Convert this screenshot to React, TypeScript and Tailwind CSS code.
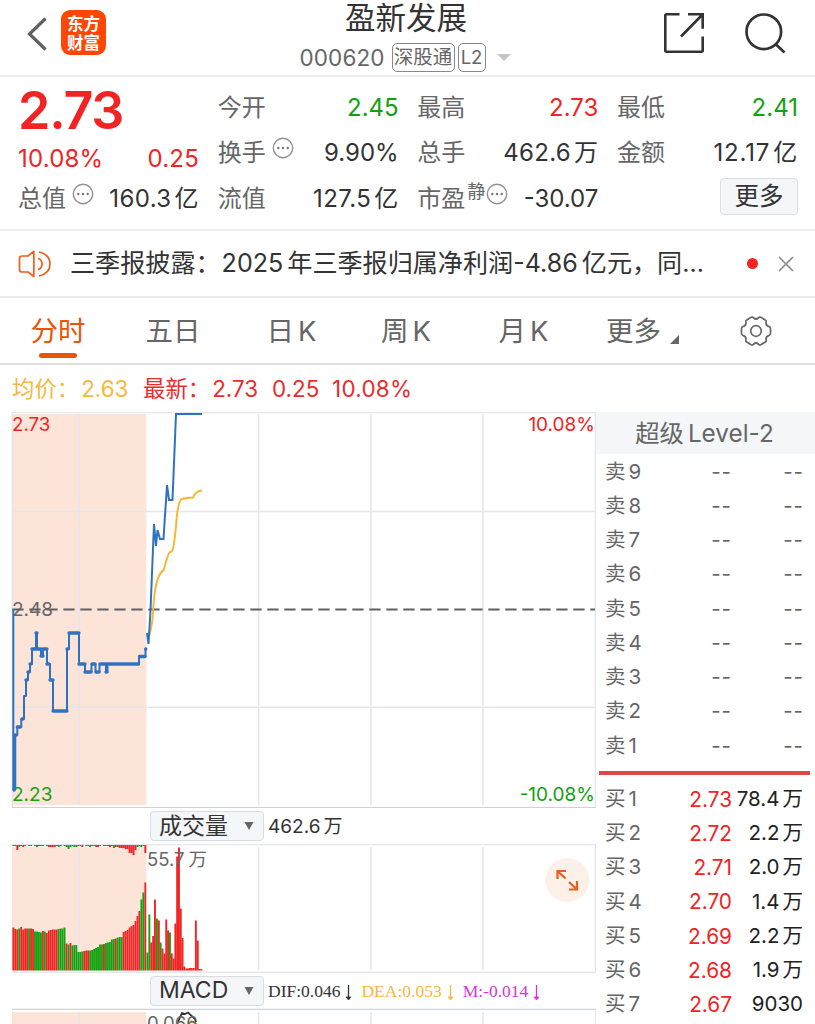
import { clsx } from "clsx";

const RED = "#f12323";
const GREEN = "#12a10f";
const BLUE = "#2f73c0";
const GRID = "#e5e6ec";

const tabs = [
  { label: "五日", suffix: "", width: "w-[114px]" },
  { label: "日", suffix: "K", width: "w-[123px]" },
  { label: "周", suffix: "K", width: "w-[106px]" },
  { label: "月", suffix: "K", width: "w-[129px]" },
];

const sells = [9, 8, 7, 6, 5, 4, 3, 2, 1];

const buys = [
  { level: 1, price: "2.73", volume: "78.4", unit: "万" },
  { level: 2, price: "2.72", volume: "2.2", unit: "万" },
  { level: 3, price: "2.71", volume: "2.0", unit: "万" },
  { level: 4, price: "2.70", volume: "1.4", unit: "万" },
  { level: 5, price: "2.69", volume: "2.2", unit: "万" },
  { level: 6, price: "2.68", volume: "1.9", unit: "万" },
  { level: 7, price: "2.67", volume: "9030", unit: "" },
];

// call auction volume, one bar per slot
const auctionHeights = [
  43, 41.5, 41, 42, 43.5, 41, 42, 42, 42, 42, 41.5, 39, 39, 38.5, 38, 39.5, 39, 37.5, 40, 40.5, 41, 41, 41,
  41.5, 42, 42, 43, 27, 26, 27.5, 25, 25.5, 25.5, 18.5, 18.5, 19, 19.5, 20, 20, 20, 20.5, 21.5, 22.5, 23.5,
  26, 26, 26.5, 27.5, 28, 28.5, 31, 31.5, 32, 33, 33.5, 33.5, 38.5, 39.5, 40.5, 43, 44.5, 45.5, 49.5, 54.5,
  59.5, 71, 78, 88,
];
const auctionColors = "RRRGRRRRGRRGGGGRGRRRRRRGGGGRGRGGGGGGRRRGGGGGGGRGGGGGRGGGRRRRRRRRRGGR";

// unmatched volume hanging from the top edge
const unmatched =
  "1R1R5R2G1R2R1R0R1R1G0R1G2G1R1G1G0R1G2R2R2R2R1G2G1R0G1R2G4G2G1R2G2G1R1G2R0R1G1R2G1G1G2R2R1G0G1G1G1R2R1G3G2R2G3R3R3R4R4R8R8R10R5R2G1R2G1G8R";

const sessionBars: [number, number, string][] = [
  [146.5, 18, "G"], [148.4, 56, "G"], [150.3, 28, "R"], [152.2, 34.5, "R"], [154, 71, "R"],
  [156, 52, "G"], [157.9, 50, "R"], [159.7, 28, "G"], [161.5, 22, "R"], [163.4, 17, "R"],
  [165.3, 51, "R"], [167.1, 40, "R"], [169, 38, "G"], [170.8, 17, "R"], [172.7, 12, "R"],
  [174.4, 47, "R"], [176.2, 114, "R"], [178, 123, "R"], [179.8, 62, "R"], [181.6, 32.5, "R"],
  [183.4, 4, "R"], [185.3, 2, "R"], [187.1, 2, "R"], [189, 2.5, "R"], [190.8, 2.5, "R"],
  [192.7, 2.5, "R"], [194.9, 50, "R"], [196.8, 30, "R"], [198.6, 1.5, "R"], [200.4, 1.5, "R"],
];

function Value({ num, unit, className }: { num: string; unit?: string; className?: string }) {
  return (
    <span className={clsx("whitespace-nowrap", className)}>
      {num}
      {unit && <span className="ml-[3px]">{unit}</span>}
    </span>
  );
}

function InfoDot() {
  return (
    <svg viewBox="0 0 22 22" className="mb-[10px] h-[22px] w-[22px] shrink-0">
      <circle cx="11" cy="11" r="9.7" fill="none" stroke="#929292" strokeWidth="1.4" />
      <circle cx="6.3" cy="11" r="1.2" fill="#777" />
      <circle cx="11" cy="11" r="1.2" fill="#777" />
      <circle cx="15.7" cy="11" r="1.2" fill="#777" />
    </svg>
  );
}

function Header() {
  return (
    <header className="flex h-[77px] border-b-2 border-[#ededed]">
      <div className="flex w-[240px] items-start pt-[10px] pl-[27px]">
        <svg viewBox="0 0 20 34" className="mt-[7px] h-[34px] w-5" fill="none" stroke="#606060" strokeWidth="3.2">
          <path d="M18.5 1.5 2.5 17l16 15.5" />
        </svg>
        <div className="ml-[14px] flex h-[45px] w-[45px] flex-col items-center justify-center rounded-[9px] bg-[#ff4605] pt-[2px] text-[16.5px] leading-[18.5px] font-bold text-white">
          <span>东方</span>
          <span>财富</span>
        </div>
      </div>
      <div className="flex w-[332px] flex-col items-center">
        <h1 className="h-[37px] text-[30.5px] leading-[35px] text-[#333]">盈新发展</h1>
        <div className="flex h-[42px] items-center pt-[5px] pr-[2px] text-[#666]">
          <span className="w-[92px] text-[22.5px] tracking-[0.1px]">000620</span>
          <span className="flex h-[29px] w-[63px] items-center justify-center rounded-[5px] border-[1.5px] border-[#888] text-[19.5px]">
            深股通
          </span>
          <span className="ml-[3px] flex h-[29px] w-[28px] items-center justify-center rounded-[5px] border-[1.5px] border-[#888] text-[18.5px]">
            L2
          </span>
          <svg viewBox="0 0 14 7" className="ml-[11px] h-[7px] w-[14px]">
            <path d="M0 0h14L7 7z" fill="#c4c4c4" />
          </svg>
        </div>
      </div>
      <div className="flex flex-1 items-start pt-[12px] pl-[91px]">
        <svg viewBox="0 0 42 42" className="h-[42px] w-[42px]" fill="none" stroke="#333" strokeWidth="2.6">
          <path d="M16.5 2.3H3.5Q2.3 2.3 2.3 3.5v35q0 1.2 1.2 1.2h35q1.2 0 1.2-1.2V24.5M25 2.3h14.7v14.5M39.5 2.5 18 24.5" />
        </svg>
        <svg viewBox="0 0 42 42" className="ml-[39px] h-[42px] w-[42px]" fill="none" stroke="#333" strokeWidth="2.7">
          <circle cx="19.8" cy="19.8" r="17.3" />
          <path d="m31.5 32 9 8.5" />
        </svg>
      </div>
    </header>
  );
}

function Stat({ label, children, info }: { label: string; children?: React.ReactNode; info?: boolean }) {
  return (
    <div className="flex h-[45.5px] items-center justify-between">
      <span className="flex items-center gap-[6px] text-[#666]">
        {label}
        {info && <InfoDot />}
      </span>
      {children}
    </div>
  );
}

function Quote() {
  return (
    <section className="flex h-[154px] justify-between border-b-2 border-[#ededed] pt-[8px] pr-[17px] pl-[18px] text-[24px] text-[#333]">
      <div className="w-[181px]">
        <div className="h-[52px] text-[52px] leading-[51px] font-semibold tracking-[-1.2px] text-[#f12323]">2.73</div>
        <div className="flex h-[39px] items-center justify-between pt-[5px] tracking-[0.2px] text-[#f12323]">
          <span>10.08%</span>
          <span>0.25</span>
        </div>
        <Stat label="总值" info>
          <Value num="160.3" unit="亿" className="tracking-[0.4px]" />
        </Stat>
      </div>
      <div className="w-[181px]">
        <Stat label="今开">
          <Value num="2.45" className="text-[#12a10f]" />
        </Stat>
        <Stat label="换手" info>
          <Value num="9.90%" />
        </Stat>
        <Stat label="流值">
          <Value num="127.5" unit="亿" className="tracking-[0.4px]" />
        </Stat>
      </div>
      <div className="w-[181px]">
        <Stat label="最高">
          <Value num="2.73" className="text-[#f12323]" />
        </Stat>
        <Stat label="总手">
          <Value num="462.6" unit="万" className="tracking-[0.3px]" />
        </Stat>
        <div className="flex h-[45.5px] items-center justify-between">
          <span className="flex items-center text-[#666]">
            市盈
            <span className="mb-[14px] ml-[2px] text-[18px]">静</span>
            <span className="ml-px">
              <InfoDot />
            </span>
          </span>
          <Value num="-30.07" />
        </div>
      </div>
      <div className="w-[181px]">
        <Stat label="最低">
          <Value num="2.41" className="text-[#12a10f]" />
        </Stat>
        <Stat label="金额">
          <Value num="12.17" unit="亿" className="tracking-[0.8px]" />
        </Stat>
        <div className="flex justify-end pt-[2px]">
          <button className="h-[37px] w-[78px] rounded-[4px] border border-[#dcdee2] bg-[#f4f6f9] text-[24.5px] leading-[35px]">
            更多
          </button>
        </div>
      </div>
    </section>
  );
}

function Notice() {
  return (
    <section className="flex h-[67px] items-center border-b-2 border-[#ededed] pl-[18px] text-[#333]">
      <svg viewBox="0 0 34 28" className="h-[28px] w-[34px]" fill="none" stroke="#ea5e1b" strokeWidth="1.7" strokeLinejoin="round">
        <path d="M15.8 1.3v25.2L10 22H4q-2.5 0-2.5-2.5v-11Q1.5 6 4 6h6z" />
        <path d="M20 8.5q4 1 4 5.500t-4 5.500M21 2q11 2.500 11 12T21 26" />
      </svg>
      <div className="ml-[18px] flex w-[662px] text-[25.1px] whitespace-nowrap">
        三季报披露：<span className="ml-px">2025</span>
        <span className="ml-[4px]">年三季报归属净利润-4.86</span>
        <span className="ml-[4px]">亿元，同…</span>
      </div>
      <span className="ml-[15px] h-[11px] w-[11px] rounded-full bg-[#f12323]" />
      <svg viewBox="0 0 16 16" className="ml-[20px] h-4 w-4" stroke="#8a8a8a" strokeWidth="1.7">
        <path d="m1 1 14 14M15 1 1 15" />
      </svg>
    </section>
  );
}

function Tabs() {
  return (
    <nav className="flex h-[67px] border-b-2 border-[#dedede] text-[27.5px] text-[#666]">
      <div className="flex w-[116px] flex-col items-center pt-[11px] text-[#ea5504]">
        <span className="h-[44px] leading-[44px]">分时</span>
        <span className="h-[5px] w-[38px] rounded-full bg-[#ea5504]" />
      </div>
      {tabs.map((tab) => (
        <div key={tab.label} className={clsx("flex justify-center gap-[4px] pt-[11px] leading-[44px]", tab.width)}>
          <span>{tab.label}</span>
          {tab.suffix && <span>{tab.suffix}</span>}
        </div>
      ))}
      <div className="flex w-[116px] pt-[11px] pl-[18px] leading-[44px]">
        更多
        <svg viewBox="0 0 9 9" className="mt-[26px] ml-[9px] h-[9px] w-[9px]">
          <path d="M9 0v9H0z" fill="#666" />
        </svg>
      </div>
      <svg viewBox="0 0 32 32" className="mt-[17px] ml-[36px] h-8 w-8" fill="none" stroke="#666" strokeWidth="1.7">
        <circle cx="16" cy="16" r="5.3" />
        <path d="M11.2 2.3q1.5-.6 2.5.7 2.3 2 4.600 0 1-1.3 2.500-.7l4.500 2.600q1.300.8.800 2.300-.5 3.200 2.500 4.200 1.500.300 1.800 1.700l.2 2.900-.2 2.900q-.3 1.400-1.800 1.700-3 1-2.500 4.200.5 1.500-.8 2.300l-4.500 2.600q-1.500.6-2.500-.7-2.300-2-4.600 0-1 1.300-2.500.7l-4.500-2.600q-1.300-.8-.8-2.300.5-3.200-2.500-4.200-1.500-.300-1.800-1.700L1.400 16l.2-2.900q.3-1.400 1.800-1.700 3-1 2.500-4.200-.5-1.500.8-2.300z" />
      </svg>
    </nav>
  );
}

function Verticals({ top, bottom }: { top: number; bottom: number }) {
  return (
    <g stroke={GRID} strokeWidth="1.5">
      {[79, 258.6, 371, 483].map((x) => (
        <line key={x} x1={x} x2={x} y1={top} y2={bottom} />
      ))}
    </g>
  );
}

function PriceChart() {
  return (
    <svg viewBox="0 412 596 396" className="block h-[396px] w-[596px]">
      <rect x="12" y="414" width="134.3" height="391" fill="#fce4d9" />
      <Verticals top={414} bottom={805} />
      <g stroke={GRID} strokeWidth="1.5">
        <path d="M12 412.5h584M12 511.6h583M12 707.3h583M12.3 412v395M595.5 412v396" />
      </g>
      <path d="M12 807.5h584" stroke="#cfd3d8" />
      <g fontSize="18.7">
        <text x="12" y="431" fill={RED}>2.73</text>
        <text x="12" y="615.5" fill="#666" fontSize="19">2.48</text>
        <text x="12" y="800.5" fill={GREEN} fontSize="19">2.23</text>
        <text x="595" y="431" fill={RED} textAnchor="end" fontSize="19">10.08%</text>
        <text x="595" y="800.5" fill={GREEN} textAnchor="end" fontSize="19">-10.08%</text>
      </g>
      <path d="M12.3 609.5H595" stroke="#606060" strokeWidth="1.9" strokeDasharray="11.3 5.7" />
      <path
        d="M149 636Q152 628 153 612 154.5 585 159 576 161 571.5 163.5 570.5 166 561 169 553 170.5 552 172.5 550.5 174.5 543 176 526 177.5 504 181 499.5 184 498 193 497.5 196 490.5 202 490.5"
        fill="none"
        stroke="#f8b62d"
        strokeWidth="1.9"
      />
      <g fill="none" stroke={BLUE} strokeLinejoin="round">
        <path
          d="M13.3 609V790M15.3 735v55M15.3 735h2v-8h4v-8h2.7v-23h2v-16h2v-8h2v-8h2v-15h4v-16h1v16h4v7h2v-7h4v15h3v16h3v31h14v-62h2v-16h10v31h6v8h6.500v-8h4v8h4v-8h6.500v8h1.500v-8h31.500v-7.500h6.500V649"
          strokeWidth="2"
        />
        <path
          d="M15.3 735h1M17.3 727h3M22 719h1M24 696M26 680h1M28 672h1M30 664h1M32 649h4M36 633h1M37 649h4M41 656h2M43 649h4M47 664h2M50 680h3M53 711h14M67 649h1M69 633h10M79 664h6M85 672h6M92 664h3M96 672h3M100 664h6M106 672h1M107.5 664h31M139.5 656.5h5.500M145.7 649h.1M14 790h.1"
          strokeWidth="3.3"
          strokeLinecap="round"
        />
        <path
          d="M147 633l1.5 11 2-34 3.500-86 2 22 1.500-16 2.500 9h3.500l3.500-54 2 15h3.500l3.500-86h26"
          strokeWidth="2"
          strokeLinejoin="miter"
        />
      </g>
    </svg>
  );
}

function VolumeChart() {
  const hanging = unmatched.match(/\d+[RG]/g) ?? [];
  return (
    <svg viewBox="0 844 596 129" className="block h-[129px] w-[596px]">
      <rect x="12" y="847" width="134.3" height="123.5" fill="#fce4d9" />
      <Verticals top={847} bottom={970} />
      <g stroke={GRID}>
        <path d="M12 844.5h584M12 972.3h584M595.5 844v129" strokeWidth="1.5" />
      </g>
      {auctionHeights.map((h, i) => (
        <rect key={i} x={12.4 + i * 1.97} y={970.5 - h} width="1.85" height={h} fill={auctionColors[i] === "R" ? RED : GREEN} />
      ))}
      {hanging.slice(0, 68).map((item, i) => (
        <rect key={i} x={12.4 + i * 1.97} y="845" width="1.97" height={parseInt(item)} fill={item.endsWith("R") ? RED : GREEN} />
      ))}
      {sessionBars.map(([x, h, color]) => (
        <rect key={x} x={x} y={970.5 - h} width="1.9" height={h} fill={color === "R" ? RED : GREEN} />
      ))}
      <text x="147" y="865.5" fill="#666" fontSize="18.5">
        55.7<tspan dx="4">万</tspan>
      </text>
      <circle cx="567.3" cy="880" r="22" fill="#fdf0e8" />
      <path
        d="M557.5 879v-8h8.500M558 871.500l7.500 7M569 889.500h8v-8.500M576.500 889l-7.500-7"
        fill="none"
        stroke="#ea5e1b"
        strokeWidth="2.2"
      />
    </svg>
  );
}

function MacdChart() {
  return (
    <svg viewBox="0 1008 596 16" className="block h-4 w-[596px]">
      <rect x="12" y="1012" width="134.3" height="12" fill="#fce4d9" />
      <Verticals top={1012} bottom={1024} />
      <path d="M12 1009.3h584" stroke="#cfd3d8" strokeWidth="1.3" />
      <path d="M595.5 1008v16" stroke={GRID} />
      <path d="M186 1026l5-5 4 2 3 3" fill="none" stroke="#f8b62d" strokeWidth="2" />
      <path d="M178 1022l4-9 3 1 3-1.500 7 6.500 1 3" fill="none" stroke="#333" strokeWidth="1.8" />
      <text x="147" y="1030" fill="#666" fontSize="18.5">0.066</text>
    </svg>
  );
}

function Picker({ label }: { label: string }) {
  return (
    <button className="flex h-[30px] w-[114px] items-center justify-between rounded-[4px] border border-[#d9dce0] bg-[#f5f6f9] pr-[9px] pl-[8px] text-[23px] text-[#333]">
      {label}
      <svg viewBox="0 0 10 8" className="h-2 w-[10px]">
        <path d="M.5 0h9L5 8z" fill="#666" />
      </svg>
    </button>
  );
}

function Indicator({ label, color }: { label: string; color: string }) {
  return (
    <span className={clsx("flex items-center gap-[5px]", color)}>
      {label}
      <svg viewBox="0 0 7 16" className="mt-[3px] h-4 w-[7px]" fill="none" stroke="currentColor">
        <path d="M3.5 0v14" strokeWidth="1.3" />
        <path d="M1 12 3.500 15 6 12z" fill="currentColor" strokeWidth=".8" />
      </svg>
    </span>
  );
}

function OrderBook() {
  return (
    <aside className="w-[219px] text-[20.5px] text-[#666]">
      <div className="h-[42px] bg-[#f4f6f8] pr-[2px] text-center text-[24.3px] leading-[43px]">
        超级<span className="ml-[4px]">Level-2</span>
      </div>
      <div className="pt-[1px]">
        {sells.map((level) => (
          <div key={level} className="flex h-[34.24px] items-center pr-[11px] pl-[9px]">
            <span className="w-[64px]">
              卖<span className="ml-[3px]">{level}</span>
            </span>
            <span className="w-[63px] text-right tracking-[1px]">--</span>
            <span className="flex-1 text-right tracking-[1px]">--</span>
          </div>
        ))}
      </div>
      <div className="mt-[8px] mr-[5px] mb-[7px] ml-[3px] h-[4px] bg-[#e04848]" />
      {buys.map((row) => (
        <div key={row.level} className="flex h-[34.24px] items-center pr-[12px] pl-[9px]">
          <span className="w-[60px]">
            买<span className="ml-[3px]">{row.level}</span>
          </span>
          <span className="w-[67px] text-right text-[20.8px] text-[#f12323]">{row.price}</span>
          <Value num={row.volume} unit={row.unit} className="flex-1 text-right text-[#222]" />
        </div>
      ))}
    </aside>
  );
}

export default function App() {
  return (
    <div className="h-[1024px] w-[815px] overflow-hidden bg-white font-['Inter','Noto_Sans_CJK_SC',sans-serif]">
      <Header />
      <Quote />
      <Notice />
      <Tabs />
      <div className="flex h-[47px] items-center pt-px pl-[12px] text-[22.4px] text-[#ea2c2c]">
        <span className="w-[131px] text-[#f8b83c]">
          均价：<span className="ml-[2px]">2.63</span>
        </span>
        <span className="w-[129px]">
          最新：<span className="ml-[2px]">2.73</span>
        </span>
        <span className="w-[60px]">0.25</span>
        <span className="tracking-[0.3px]">10.08%</span>
      </div>
      <div className="flex">
        <main className="w-[596px]">
          <PriceChart />
          <div className="flex h-[36px] items-center pl-[150px]">
            <Picker label="成交量" />
            <Value num="462.6" unit="万" className="ml-[4px] pt-[2px] text-[19px] text-[#333]" />
          </div>
          <VolumeChart />
          <div className="flex h-[35px] items-center pl-[150px]">
            <Picker label="MACD" />
            <div className="ml-[4px] flex gap-[9px] pt-[2px] font-['Liberation_Serif',serif] text-[17.5px]">
              <Indicator label="DIF:0.046" color="text-[#333]" />
              <Indicator label="DEA:0.053" color="text-[#f8b83c]" />
              <Indicator label="M:-0.014" color="text-[#dc2fdc]" />
            </div>
          </div>
          <MacdChart />
        </main>
        <OrderBook />
      </div>
    </div>
  );
}
